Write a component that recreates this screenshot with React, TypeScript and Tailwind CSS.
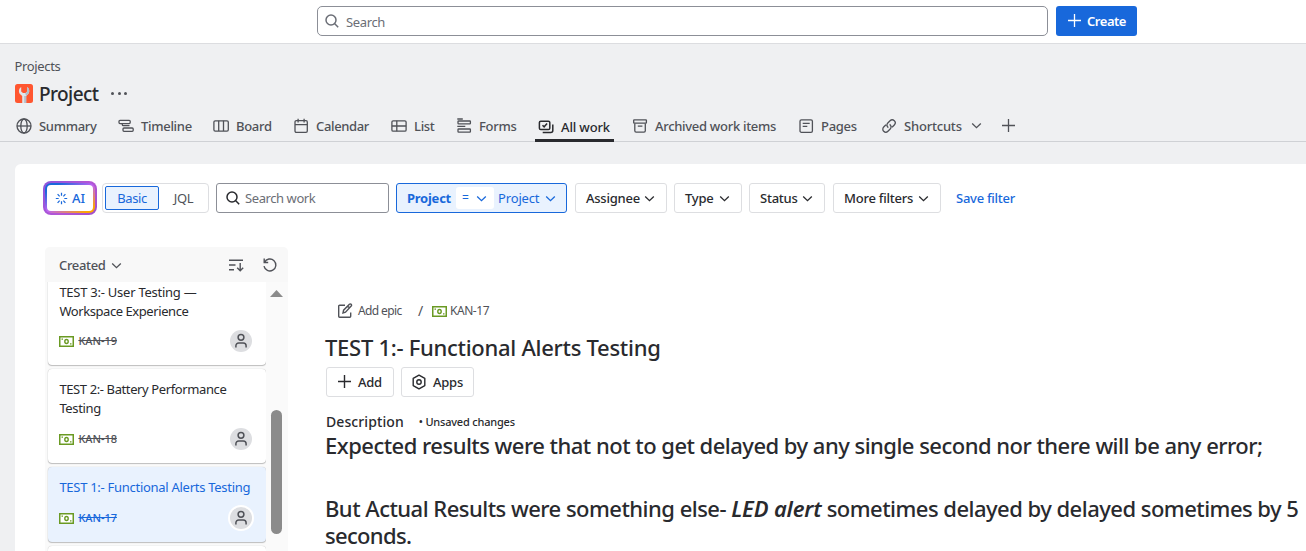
import type { ReactNode } from "react";

type IconProps = { className?: string; children?: ReactNode };

function Icon({ className = "", children }: IconProps) {
  return (
    <svg
      viewBox="0 0 16 16"
      width="16"
      height="16"
      fill="none"
      stroke="currentColor"
      strokeWidth="1.5"
      className={`shrink-0 ${className}`}
    >
      {children}
    </svg>
  );
}

const Chevron = ({ className = "" }: { className?: string }) => (
  <svg viewBox="0 0 11 11" width="11" height="11" fill="none" stroke="currentColor" strokeWidth="1.3" className={`shrink-0 ${className}`}>
    <path d="M1.2 3.500 5.500 7.700 9.800 3.500" />
  </svg>
);

const SearchIcon = ({ className = "" }: { className?: string }) => (
  <Icon className={className}>
    <circle cx="7" cy="7" r="5" />
    <path d="m10.500 10.500 3.700 3.700" />
  </Icon>
);

const PlusIcon = ({ className = "" }: { className?: string }) => (
  <Icon className={className}>
    <path d="M7.500 1v13M1 7.500h13" />
  </Icon>
);

const GlobeIcon = () => (
  <Icon className="[stroke-width:1.3]">
    <circle cx="8" cy="8" r="7" />
    <ellipse cx="8" cy="8" rx="3.2" ry="7" />
    <path d="M1 8h14" />
  </Icon>
);

const TimelineIcon = () => (
  <Icon className="[stroke-width:1.3]">
    <rect x="1" y="2.300" width="11.200" height="3.300" rx="1" />
    <path d="M4.300 5.600v1.100a1 1 0 0 0 1 1h6.200" />
    <rect x="5" y="10" width="10.200" height="3.300" rx="1" />
  </Icon>
);

const BoardIcon = () => (
  <Icon className="[stroke-width:1.3]">
    <rect x="0.9" y="2.8" width="14.4" height="10.3" rx="1.3" />
    <path d="M5.7 2.8v10.3M10.5 2.8v10.3" />
  </Icon>
);

const CalendarIcon = () => (
  <Icon className="[stroke-width:1.3]">
    <rect x="2" y="2.6" width="12.3" height="11.7" rx="1.3" />
    <path d="M2 6.7h12.3M5.1 0.8v3.6M11.1 0.8v3.6" />
  </Icon>
);

const ListIcon = () => (
  <Icon className="[stroke-width:1.3]">
    <rect x="0.9" y="2.8" width="14.2" height="10.4" rx="1.3" />
    <path d="M0.9 8h14.2M5.8 2.8v10.4" />
  </Icon>
);

const FormsIcon = () => (
  <Icon className="[stroke-width:1.3]">
    <path d="M1.3 1h5.5M1.3 8.4h8" />
    <rect x="2" y="3" width="12.4" height="2.9" rx="0.6" />
    <rect x="2" y="11" width="12.4" height="3.2" rx="0.6" />
  </Icon>
);

const AllWorkIcon = () => (
  <Icon>
    <rect x="1.4" y="2.2" width="10.4" height="8.4" rx="1.4" />
    <path d="m4.5 6.2 1.6 1.6 3-3.4M14.8 5.5v6a2 2 0 0 1-2 2H4.7" />
  </Icon>
);

const ArchiveIcon = () => (
  <Icon className="[stroke-width:1.3]">
    <rect x="1.7" y="1.8" width="12.7" height="3.4" rx="0.5" />
    <path d="M2.8 5.4v7.4a1.3 1.3 0 0 0 1.3 1.3H12a1.3 1.3 0 0 0 1.3-1.3V5.4M5.8 8.1h4.6" />
  </Icon>
);

const PageIcon = () => (
  <Icon className="[stroke-width:1.3]">
    <rect x="2" y="1.9" width="12.4" height="12.4" rx="1.4" />
    <path d="M4.7 5.3h7M4.7 8.3h4.6" />
  </Icon>
);

const LinkIcon = () => (
  <Icon className="[stroke-width:1.3]">
    <g transform="rotate(-45 8 8)">
      <path d="M6.700 5H3.500a3 3 0 0 0 0 6h3.200a3 3 0 0 0 2.900-3.700M9.300 11h3.200a3 3 0 0 0 0-6H9.300a3 3 0 0 0-2.900 3.700" />
    </g>
  </Icon>
);

const SparkIcon = () => (
  <Icon className="h-[13px] w-[13px]">
    <path d="M8 1v3.500M8 11.500V15M1 8h3.500M11.500 8H15M3.200 2.700l2.500 2.800M12.800 2.700l-2.500 2.800M3.200 13.300l2.500-2.800M12.800 13.300l-2.500-2.800" />
  </Icon>
);

const WrenchTile = () => (
  <svg viewBox="0 0 18 19" width="18" height="19" className="shrink-0">
    <rect width="18" height="19" rx="2.500" fill="#ff5630" />
    <path d="M6.200 3C3.500 4.500 3.200 8.700 5.500 10.600L7.200 12v7h4v-7l1.500-1.400c2.300-2 2-6-.5-7.600v4.500L10.500 9H8L6.200 7.500z" fill="#dfe5ea" />
    <path d="M9.200 12h2v7h-2zM12.200 3c2.500 1.600 2.800 5.600.5 7.600L11.200 12l-1-2.500 2-2z" fill="#b3bfc9" />
  </svg>
);

const MoneyIcon = () => (
  <svg viewBox="0 0 15 11" width="15" height="11" fill="none" stroke="#6a9a23" className="shrink-0">
    <rect x="0.750" y="0.750" width="13.500" height="9.500" strokeWidth="1.500" fill="#fff" />
    <ellipse cx="7.500" cy="5.500" rx="1.700" ry="2" strokeWidth="1.400" />
    <path d="M2.500 3.200h1.500M11 7.800h1.500" strokeWidth="1.300" />
  </svg>
);

const Avatar = ({ ring = false }: { ring?: boolean }) => (
  <span className={`flex h-[22px] w-[22px] items-center justify-center rounded-full bg-[#dddee1] text-[#505258] ${ring ? "ring-2 ring-white" : ""}`}>
    <Icon>
      <circle cx="8" cy="4.300" r="2.900" />
      <path d="M2.900 14.600v-1.800a2.800 2.800 0 0 1 2.800-2.800h4.600a2.800 2.800 0 0 1 2.800 2.800v1.800" />
    </Icon>
  </span>
);

type TabProps = { icon: ReactNode; label: string; width: string; tracking?: string };

const Tab = ({ icon, label, width, tracking = "tracking-[-0.3px]" }: TabProps) => (
  <div className={`flex h-[31px] shrink-0 items-center gap-[7px] ${width} ${tracking}`}>
    {icon}
    <span>{label}</span>
  </div>
);

const FilterButton = ({ label, width }: { label: string; width: string }) => (
  <button className={`flex h-[30px] shrink-0 items-center justify-between rounded-[3px] border border-[#dddee1] pr-[11px] pl-[10px] font-medium tracking-[-0.24px] text-[#292a2e] ${width}`}>
    {label}
    <Chevron />
  </button>
);

type CardProps = { title: ReactNode; id: string; height: string; selected?: boolean };

const Card = ({ title, id, height, selected = false }: CardProps) => (
  <article
    className={`flex w-[218px] shrink-0 flex-col justify-between rounded-[4px] px-[11.4px] pt-[11px] pb-[13px] shadow-[0_1px_1px_#1e1f2140,0_0_1px_#1e1f214f] ${height} ${
      selected ? "bg-[#e9f2fe] text-[#1868db]" : "bg-white text-[#292a2e]"
    }`}
  >
    <p className="text-[13px] leading-[19px] whitespace-nowrap">{title}</p>
    <div className="flex items-center gap-[4px] pr-[3px]">
      <MoneyIcon />
      <span className={`flex-1 text-[11px] leading-[16px] font-medium tracking-[-0.05px] line-through ${selected ? "" : "text-[#505258]"}`}>{id}</span>
      <Avatar ring={selected} />
    </div>
  </article>
);

function TopBar() {
  return (
    <header className="flex h-[44px] shrink-0 items-start border-b border-[#dcdde0] bg-white pt-[6px] pl-[317px]">
      <div className="flex h-[30px] w-[731px] items-center rounded-[5px] border border-[#8c8f97] pl-[6px] text-[#6b6e76]">
        <SearchIcon />
        <span className="ml-[6px] pt-[1px] tracking-[-0.36px]">Search</span>
      </div>
      <button className="ml-[8px] flex h-[30px] w-[81px] items-center gap-[4px] rounded-[3px] bg-[#1868db] pl-[11px] font-semibold tracking-[-0.46px] text-white">
        <PlusIcon className="[stroke-width:1.3]" />
        Create
      </button>
    </header>
  );
}

function ProjectHeader() {
  return (
    <div className="flex h-[98px] shrink-0 flex-col border-b border-[#cfd1d5] text-[#505258]">
      <div className="mt-[12px] ml-[14.5px] h-[20px] shrink-0 leading-[20px] tracking-[-0.34px]">Projects</div>
      <div className="mt-[4px] ml-[15px] flex h-[26px] shrink-0 items-center">
        <WrenchTile />
        <h1 className="ml-[6px] pt-[1px] text-[19px] font-medium tracking-[-0.58px] text-[#292a2e]">Project</h1>
        <span className="ml-[13px] flex gap-[3.5px] pt-[1px]">
          <i className="size-[3px] rounded-full bg-[#505258]" />
          <i className="size-[3px] rounded-full bg-[#505258]" />
          <i className="size-[3px] rounded-full bg-[#505258]" />
        </span>
      </div>
      <nav className="mt-[4px] flex h-[31px] shrink-0 pl-[16px] font-medium">
        <Tab icon={<GlobeIcon />} label="Summary" width="w-[102px]" />
        <Tab icon={<TimelineIcon />} label="Timeline" width="w-[95px]" />
        <Tab icon={<BoardIcon />} label="Board" width="w-[80px]" />
        <Tab icon={<CalendarIcon />} label="Calendar" width="w-[98px]" tracking="tracking-[-0.35px]" />
        <Tab icon={<ListIcon />} label="List" width="w-[65px]" />
        <Tab icon={<FormsIcon />} label="Forms" width="w-[79px]" />
        <div className="flex h-[32px] w-[79px] shrink-0 items-center gap-[7px] border-b-[3px] border-[#292a2e] pt-[4px] pl-[3px] tracking-[-0.14px] text-[#292a2e]">
          <AllWorkIcon />
          All work
        </div>
        <div className="ml-[18px] flex">
          <Tab icon={<ArchiveIcon />} label="Archived work items" width="w-[166px]" />
          <Tab icon={<PageIcon />} label="Pages" width="w-[83px]" />
          <Tab icon={<LinkIcon />} label="Shortcuts" width="w-[90px]" tracking="tracking-[-0.2px]" />
          <div className="flex h-[31px] items-center gap-[19px]">
            <Chevron />
            <PlusIcon className="[stroke-width:1.3]" />
          </div>
        </div>
      </nav>
    </div>
  );
}

function FilterBar() {
  return (
    <div className="flex h-[34px] items-center pl-[28px]">
      <button className="h-[34px] w-[54px] shrink-0 rounded-[8px] bg-[linear-gradient(135deg,#8b55dc,#b455d6_55%,#a04fc8)] p-[2px]">
        <span className="block h-full rounded-[6px] bg-[linear-gradient(150deg,#1868db_15%,#bf63f3_50%,#fca700_90%)] p-[2px]">
          <span className="flex h-full items-center gap-[4px] rounded-[4px] bg-white pl-[8px] font-medium text-[#1868db]">
            <SparkIcon />
            AI
          </span>
        </span>
      </button>
      <div className="ml-[5px] flex h-[30px] w-[107px] shrink-0 items-center rounded-[4px] border border-[#dddee1] pl-[2px] tracking-[-0.4px]">
        <span className="flex h-[24px] w-[54px] items-center justify-center rounded-[2px] border border-[#1868db] bg-[#e9f2fe] text-[#1868db]">Basic</span>
        <span className="flex-1 text-center text-[#505258]">JQL</span>
      </div>
      <div className="ml-[7px] flex h-[30px] w-[173px] shrink-0 items-center rounded-[3px] border border-[#8c8f97] pl-[8px] text-[#6b6e76]">
        <SearchIcon className="text-[#292a2e]" />
        <span className="ml-[4px] tracking-[-0.42px]">Search work</span>
      </div>
      <div className="ml-[7px] flex h-[30px] w-[171px] shrink-0 items-center rounded-[3px] border border-[#1868db] bg-[#e9f2fe] pl-[10px] text-[#1868db]">
        <b className="w-[49px] tracking-[-0.25px]">Project</b>
        <span className="flex h-[22px] w-[38px] items-center justify-between rounded-[3px] bg-white pr-[7px] pl-[6px] text-[12px]">
          =<Chevron />
        </span>
        <span className="ml-[4px] tracking-[-0.15px]">Project</span>
        <Chevron className="ml-[6px]" />
      </div>
      <div className="ml-[8px] flex gap-[7px]">
        <FilterButton label="Assignee" width="w-[92px]" />
        <FilterButton label="Type" width="w-[68px]" />
        <FilterButton label="Status" width="w-[76px]" />
        <span className="flex pl-[1px]">
          <FilterButton label="More filters" width="w-[108px]" />
        </span>
      </div>
      <a className="ml-[15px] font-medium tracking-[-0.26px] text-[#1868db]">Save filter</a>
    </div>
  );
}

function WorkList() {
  return (
    <aside className="flex w-[243px] shrink-0 flex-col overflow-hidden rounded-t-[5px] bg-[#fafafa]">
      <div className="flex h-[35px] shrink-0 items-center bg-[#f8f8f8] pt-[1px] pr-[10px] pl-[14px] font-medium text-[#505258]">
        <span className="mr-[5px] tracking-[-0.34px]">Created</span>
        <Chevron />
        <Icon className="ml-auto [stroke-width:1.4]">
          <path d="M1 3.200h14M1 8h6.500M1 12.800h5M12.200 6v7.500M9.200 10.700l3 3 3-3" />
        </Icon>
        <Icon className="ml-[18px] [stroke-width:1.4]">
          <path d="M2.200 1.500v4h4M2.500 5.300A6 6 0 1 1 2 9.200" />
        </Icon>
      </div>
      <div className="flex min-h-0 flex-1">
        <div className="flex w-[221px] flex-col items-end gap-[4px] overflow-hidden pl-[3px]">
          <div className="-mt-[10px] flex shrink-0">
            <Card title={<><span className="tracking-[-0.25px]">TEST 3:- User Testing —</span><br /><span className="tracking-[-0.43px]">Workspace Experience</span></>} id="KAN-19" height="h-[93px]" />
          </div>
          <Card title={<><span className="tracking-[-0.39px]">TEST 2:- Battery Performance</span><br /><span className="tracking-[-0.35px]">Testing</span></>} id="KAN-18" height="h-[94px]" />
          <Card title={<span className="tracking-[-0.28px]">TEST 1:- Functional Alerts Testing</span>} id="KAN-17" height="h-[75px]" selected />
          <div className="h-[10px] w-[218px] shrink-0 rounded-t-[4px] bg-white shadow-[0_0_1px_#1e1f214f]" />
        </div>
        <div className="flex w-[22px] flex-col items-center pr-[2px]">
          <svg viewBox="0 0 13 7" width="13" height="7" className="mt-[8px]" fill="#8b8b8b">
            <path d="M0 7 6.500 0 13 7z" />
          </svg>
          <div className="mt-[113px] h-[124px] w-[11px] rounded-full bg-[#8b8b8b]" />
        </div>
      </div>
    </aside>
  );
}

function Detail() {
  return (
    <main className="ml-[37px] flex flex-1 flex-col text-[#292a2e]">
      <div className="mt-[54px] flex h-[20px] items-center pl-[12px] text-[12px] text-[#505258]">
        <Icon className="[stroke-width:1.4]">
          <path d="M8 2.200H2.600a.9.900 0 0 0-.9.900v10.200c0 .5.400.9.900.9h10.200c.5 0 .9-.4.900-.9V9.500M6 10l.6-2.800 5.800-5.900c.5-.5 1.300-.5 1.800 0s.5 1.300 0 1.800L8.500 9.200zM10.700 3l1.900 1.900" />
        </Icon>
        <span className="ml-[5px] w-[60px] tracking-[-0.62px]">Add epic</span>
        <span className="w-[14px] text-[14px]">/</span>
        <MoneyIcon />
        <span className="ml-[3px] tracking-[-0.45px]">KAN-17</span>
      </div>
      <h2 className="mt-[11px] text-[22px] leading-[30px] font-medium tracking-[-0.28px]">TEST 1:- Functional Alerts Testing</h2>
      <div className="mt-[5px] ml-[1px] flex gap-[7px] font-medium">
        <button className="flex h-[30px] w-[68px] items-center gap-[5px] rounded-[3px] border border-[#dddee1] pl-[10px] tracking-[-0.24px]">
          <PlusIcon className="[stroke-width:1.4]" />
          Add
        </button>
        <button className="flex h-[30px] w-[73px] items-center gap-[6px] rounded-[3px] border border-[#dddee1] pl-[9px] tracking-[-0.24px]">
          <Icon className="[stroke-width:1.4]">
            <path d="m8 1.200 5.800 3.200v7.200L8 14.800l-5.800-3.200V4.400z" strokeLinejoin="round" />
            <circle cx="8" cy="8" r="2.200" />
          </Icon>
          Apps
        </button>
      </div>
      <div className="mt-[15px] flex h-[20px] items-center pl-[1px] font-medium">
        <span className="text-[14px] tracking-[0.09px]">Description</span>
        <span className="ml-[15px] text-[11px] tracking-[-0.2px]">• Unsaved changes</span>
      </div>
      <div className="text-[22px] font-medium whitespace-nowrap">
        <p className="leading-[27px] tracking-[-0.52px]">Expected results were that not to get delayed by any single second nor there will be any error;</p>
        <p className="mt-[36px] leading-[27px] tracking-[-0.52px]">
          But Actual Results were something else- <em className="font-semibold tracking-[-0.15px]">LED alert</em> sometimes delayed by delayed sometimes by 5
        </p>
        <p className="leading-[27px] tracking-[-0.68px]">seconds.</p>
      </div>
    </main>
  );
}

export default function App() {
  return (
    <div className="flex h-[551px] w-[1306px] flex-col overflow-hidden bg-[#eff0f2] font-['Noto_Sans',sans-serif] text-[13px] leading-[20px]">
      <TopBar />
      <ProjectHeader />
      <section className="mt-[22px] ml-[15px] flex min-h-0 flex-1 flex-col rounded-tl-[6px] bg-white pt-[17px]">
        <FilterBar />
        <div className="mt-[32px] flex min-h-0 flex-1 pl-[30px]">
          <WorkList />
          <Detail />
        </div>
      </section>
    </div>
  );
}
